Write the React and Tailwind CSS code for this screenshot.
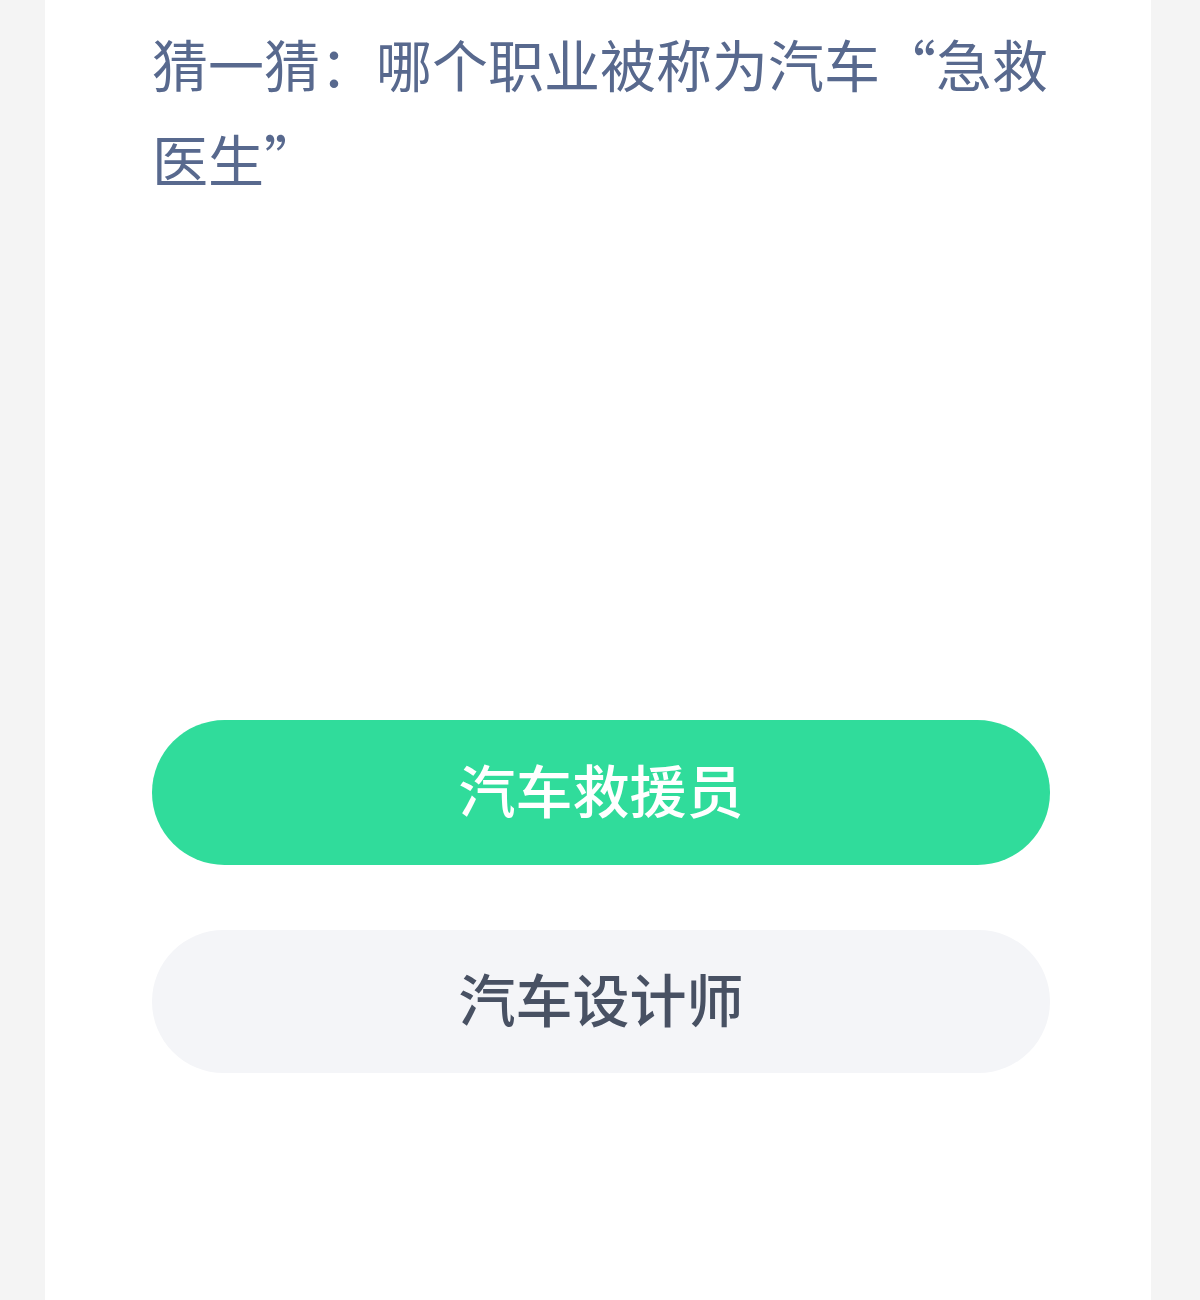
export default function App() {
  return (
    <div
      className="min-h-[1300px] w-[1200px] bg-[#f4f4f4] flex justify-center"
      style={{ fontFamily: '"Noto Sans CJK SC", "Noto Sans", sans-serif' }}
      lang="zh-CN"
    >
      <div className="w-[1106px] ml-[-4px] bg-white min-h-[1300px] flex flex-col items-start pl-[107px]">
        <div className="w-[898px] pt-[15px]">
          <p className="text-[56px] leading-[95px] text-[#58698e] font-normal">
            猜一猜：哪个职业被称为汽车“急救医生”
          </p>
          <div className="mt-[515px] flex flex-col gap-[65px]">
            <button className="h-[145px] w-full rounded-full bg-[#30dc9b] text-white text-[57px] font-medium flex items-center justify-center pb-[8px]">
              汽车救援员
            </button>
            <button className="h-[143px] w-full rounded-full bg-[#f4f5f8] text-[#485163] text-[57px] font-medium flex items-center justify-center pb-[8px]">
              汽车设计师
            </button>
          </div>
        </div>
      </div>
    </div>
  );
}
